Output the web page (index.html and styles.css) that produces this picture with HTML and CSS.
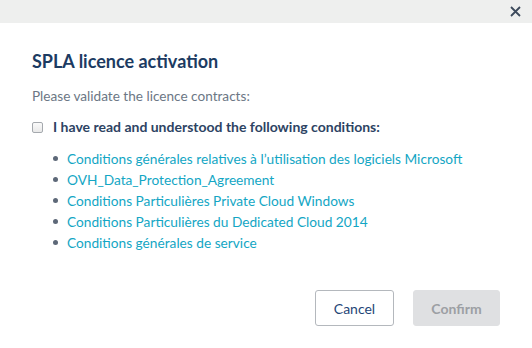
FILE: index.html
```html
<!DOCTYPE html>
<html lang="en">
<head>
  <meta charset="UTF-8">
  <title>SPLA licence activation</title>
  <link rel="stylesheet" href="styles.css">
</head>
<body>
  <div class="modal">
    <!-- barre du haut avec fermeture -->
    <div class="modal-top">
      <button class="close-btn" aria-label="Close">
        <svg width="11" height="11" viewBox="0 0 11 11"><path d="M1 1 L10 10 M10 1 L1 10" stroke="#3d4a5c" stroke-width="1.8" fill="none"/></svg>
      </button>
    </div>

    <div class="modal-body">
      <h2 class="modal-title">SPLA licence activation</h2>
      <p class="intro">Please validate the licence contracts:</p>

      <label class="agree">
        <span class="check"></span>
        <span>I have read and understood the following conditions:</span>
      </label>

      <ul class="contracts">
        <li><a href="#">Conditions générales relatives à l’utilisation des logiciels Microsoft</a></li>
        <li><a href="#">OVH_Data_Protection_Agreement</a></li>
        <li><a href="#">Conditions Particulières Private Cloud Windows</a></li>
        <li><a href="#">Conditions Particulières du Dedicated Cloud 2014</a></li>
        <li><a href="#">Conditions générales de service</a></li>
      </ul>
    </div>

    <div class="modal-footer">
      <button class="btn btn-default">Cancel</button>
      <button class="btn btn-primary" disabled>Confirm</button>
    </div>
  </div>
</body>
</html>
```

FILE: styles.css
```css
body, html {
  margin: 0;
  padding: 0;
  background: #fff;
  font-family: 'Lato', 'Open Sans', sans-serif;
}
.modal {
  width: 532px;
  height: 348px;
  display: flex;
  flex-direction: column;
}
.modal-top {
  height: 23px;
  background: #eeefee;
  display: flex;
  justify-content: flex-end;
  align-items: center;
  padding-right: 11px;
}
.close-btn {
  border: 0;
  background: none;
  padding: 0;
  width: 11px;
  height: 11px;
  display: flex;
}
.modal-body {
  padding: 28px 32px 0;
}
.modal-title {
  margin: 0;
  font-size: 18px;
  font-weight: 700;
  color: #1c3b62;
  line-height: 20px;
}
.intro {
  margin: 17px 0 0;
  font-size: 13.6px;
  line-height: 16px;
  color: #6c7785;
}
.agree {
  margin-top: 15px;
  display: flex;
  align-items: center;
  gap: 10px;
  font-size: 14px;
  font-weight: 700;
  color: #2d4363;
  line-height: 16px;
}
.check {
  width: 9px;
  height: 9px;
  border: 1px solid #a5a9ae;
  border-radius: 2px;
  background: linear-gradient(#fafafa, #e9e9e9);
}
.contracts {
  margin: 13px 0 0;
  padding-left: 21px;
  list-style: none;
}
.contracts li {
  line-height: 21px;
  font-size: 13.7px;
  display: flex;
  align-items: center;
  gap: 9px;
}
.contracts li::before {
  content: '';
  width: 5px;
  height: 5px;
  border-radius: 50%;
  background: #5d6878;
}
.contracts a {
  color: #13a6c4;
  text-decoration: none;
}
.modal-footer {
  margin-top: auto;
  padding: 0 32px 22px;
  display: flex;
  justify-content: flex-end;
  gap: 19px;
}
.btn {
  height: 36px;
  font-family: inherit;
  font-size: 14px;
  border-radius: 3px;
}
.btn-default {
  width: 79px;
  background: #fff;
  border: 1px solid #b4b8bd;
  color: #1f4677;
}
.btn-primary {
  width: 87px;
  background: #dfe0e2;
  border: 1px solid #dfe0e2;
  color: #9c9fa4;
  font-weight: 700;
}
```
